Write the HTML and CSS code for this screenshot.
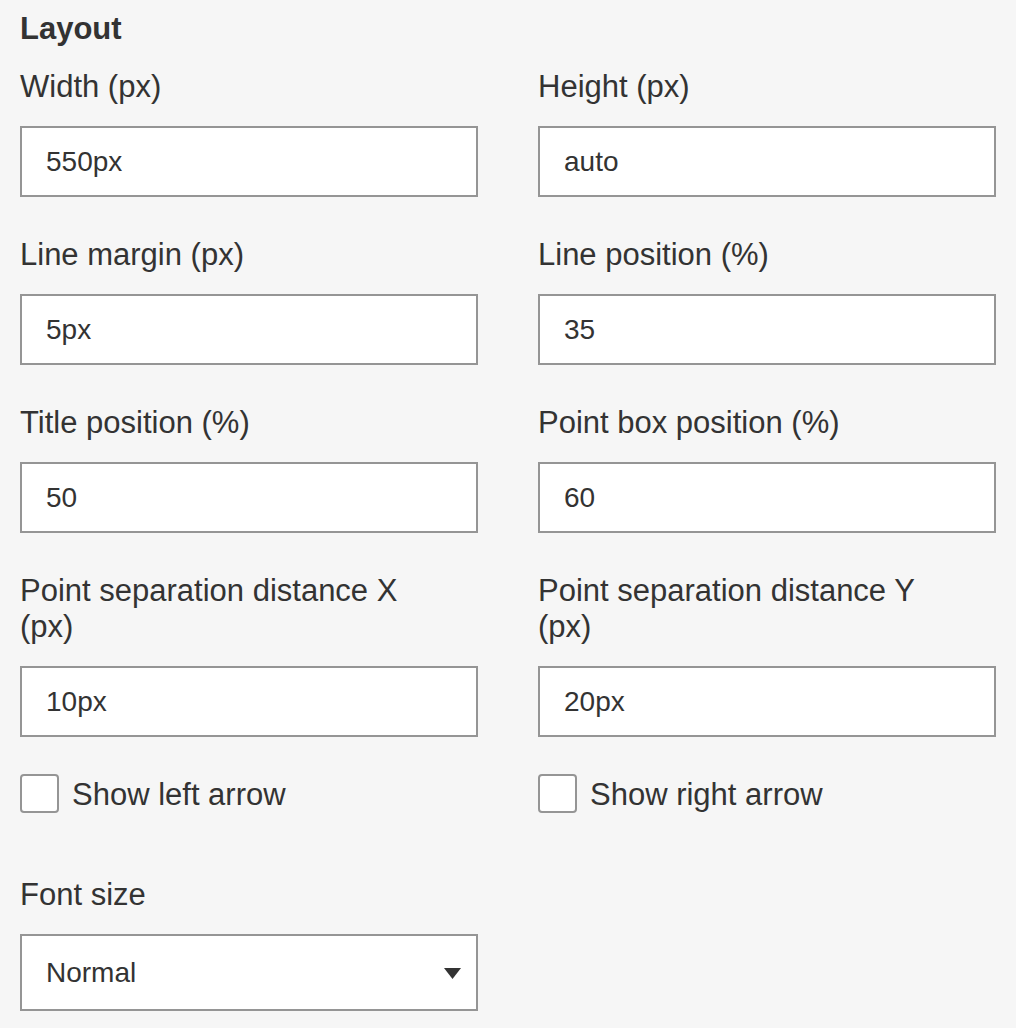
FILE: index.html
```html
<!DOCTYPE html>
<html lang="en">
<head>
  <meta charset="UTF-8">
  <title>Layout settings</title>
  <meta name="viewport" content="width=device-width, initial-scale=1.0"/>
  <link rel="stylesheet" href="styles.css">
</head>
<body>
  <h2>Layout</h2>

  <div class="grid">
    <div class="field">
      <label for="width">Width (px)</label>
      <input id="width" class="text" type="text" value="550px">
    </div>
    <div class="field">
      <label for="height">Height (px)</label>
      <input id="height" class="text" type="text" value="auto">
    </div>
    <div class="field">
      <label for="lineMargin">Line margin (px)</label>
      <input id="lineMargin" class="text" type="text" value="5px">
    </div>
    <div class="field">
      <label for="linePos">Line position (%)</label>
      <input id="linePos" class="text" type="text" value="35">
    </div>
    <div class="field">
      <label for="titlePos">Title position (%)</label>
      <input id="titlePos" class="text" type="text" value="50">
    </div>
    <div class="field">
      <label for="boxPos">Point box position (%)</label>
      <input id="boxPos" class="text" type="text" value="60">
    </div>
    <div class="field">
      <label for="sepX">Point separation distance X (px)</label>
      <input id="sepX" class="text" type="text" value="10px">
    </div>
    <div class="field">
      <label for="sepY">Point separation distance Y (px)</label>
      <input id="sepY" class="text" type="text" value="20px">
    </div>
  </div>

  <div class="grid checks">
    <label class="check"><input type="checkbox"><span>Show left arrow</span></label>
    <label class="check"><input type="checkbox"><span>Show right arrow</span></label>
  </div>

  <div class="grid font-row">
    <div class="field">
      <label for="fontSize">Font size</label>
      <div class="select-wrap">
        <select id="fontSize">
          <option>Normal</option>
          <option>Small</option>
          <option>Large</option>
        </select>
        <svg class="caret" width="17" height="11" viewBox="0 0 17 11"><path d="M0 0H17L8.5 11Z" fill="#333"/></svg>
      </div>
    </div>
  </div>
</body>
</html>
```
FILE: styles.css
```css
body {
  margin: 0;
  padding: 11px 20px 0;
  background: #f6f6f6;
  color: #333;
  font-family: 'Liberation Sans', Arial, sans-serif;
  font-size: 31px;
  line-height: 36px;
}
h2 {
  margin: 0 0 22px;
  font-size: 31px;
  line-height: 36px;
  font-weight: bold;
}
.grid {
  display: grid;
  grid-template-columns: 458px 458px;
  column-gap: 60px;
  row-gap: 40px;
}
.field label {
  display: block;
  margin-bottom: 21px;
  padding-right: 30px;
}
.text, select {
  display: block;
  width: 100%;
  box-sizing: border-box;
  height: 71px;
  margin: 0;
  padding: 0 0 0 24px;
  border: 2px solid #959595;
  border-radius: 0;
  background: white;
  color: #333;
  font-family: inherit;
  font-size: 28px;
  outline: none;
}
.checks {
  margin-top: 37px;
}
.check {
  display: flex;
  align-items: center;
  gap: 13px;
  height: 39px;
}
.check span {
  padding-top: 3px;
}
.check input {
  appearance: none;
  -webkit-appearance: none;
  width: 39px;
  height: 39px;
  margin: 0;
  box-sizing: border-box;
  border: 2px solid #959595;
  border-radius: 4px;
  background: white;
}
.font-row {
  margin-top: 64px;
}
.select-wrap {
  position: relative;
}
select {
  height: 77px;
  appearance: none;
  -webkit-appearance: none;
}
.caret {
  position: absolute;
  right: 17px;
  top: 34px;
  pointer-events: none;
}
```
